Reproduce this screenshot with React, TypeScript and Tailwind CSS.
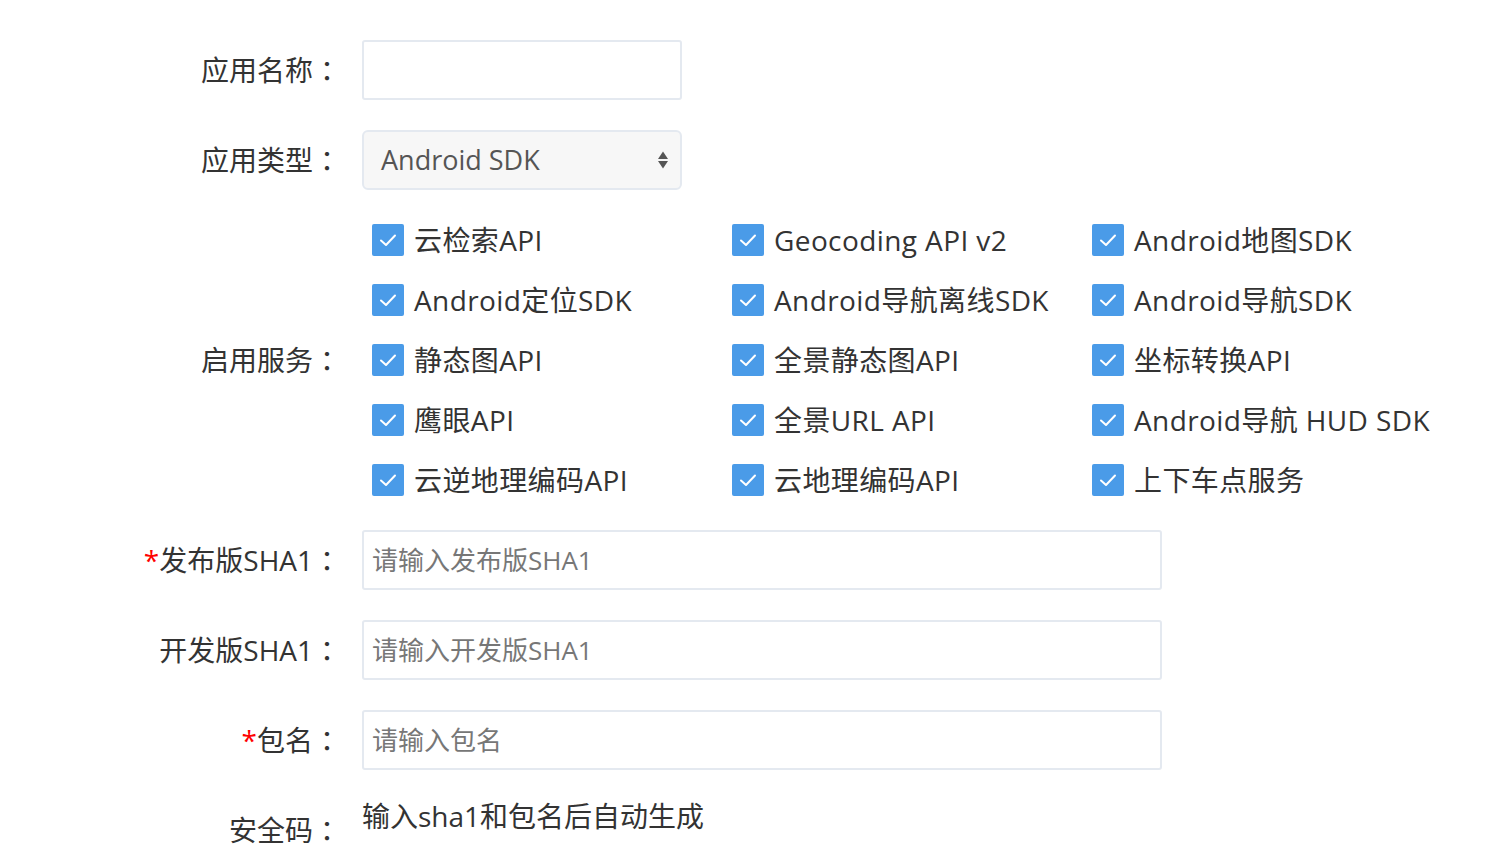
import React from "react";

const SERVICES = [
  "云检索API",
  "Geocoding API v2",
  "Android地图SDK",
  "Android定位SDK",
  "Android导航离线SDK",
  "Android导航SDK",
  "静态图API",
  "全景静态图API",
  "坐标转换API",
  "鹰眼API",
  "全景URL API",
  "Android导航 HUD SDK",
  "云逆地理编码API",
  "云地理编码API",
  "上下车点服务",
];

function Label({ text, required }: { text: string; required?: boolean }) {
  return (
    <div className="flex w-[341px] shrink-0 justify-end leading-[60px] whitespace-nowrap">
      {required && <span className="text-[#f00]">*</span>}
      <span>{text}</span>
      <span className="w-[28px] text-center font-['Noto_Sans_CJK_TC',sans-serif]">：</span>
    </div>
  );
}

function TextInput({ placeholder, wide }: { placeholder?: string; wide?: boolean }) {
  return (
    <input
      type="text"
      placeholder={placeholder}
      className={`ml-[21px] h-[60px] ${
        wide ? "w-[800px]" : "w-[320px]"
      } rounded-[3px] border-2 border-[#e4e9f0] bg-white px-[8px] text-[26px] text-[#333] outline-none placeholder:text-[#777]`}
    />
  );
}

function Check({ label }: { label: string }) {
  return (
    <label className="flex h-[60px] items-center gap-[10px] whitespace-nowrap">
      <span className="flex h-[32px] w-[32px] shrink-0 items-center justify-center rounded-[2px] bg-[#4a9be8]">
        <svg width="22" height="22" viewBox="0 0 22 22" fill="none">
          <path
            d="M4 11.5 L9 16 L18 6.5"
            stroke="white"
            strokeWidth="2"
            strokeLinecap="round"
            strokeLinejoin="round"
          />
        </svg>
      </span>
      <span className="tracking-[0.4px]">{label}</span>
    </label>
  );
}

export default function App() {
  return (
    <div className="min-h-[866px] w-[1510px] bg-white pt-[40px] font-['Open_Sans','Noto_Sans_CJK_SC',sans-serif] text-[28px] text-[#333]">
      <div className="flex items-center">
        <Label text="应用名称" />
        <TextInput />
      </div>

      <div className="mt-[30px] flex items-center">
        <Label text="应用类型" />
        <div className="ml-[21px] flex h-[60px] w-[320px] items-center justify-between rounded-[6px] border-2 border-[#e4e9f0] bg-[#f7f7f7] pl-[17px] pr-[11px] text-[27px] text-[#555]">
          <span>Android SDK</span>
          <svg width="12" height="22" viewBox="0 0 12 22">
            <path d="M6 2.5 L11 10 L1 10 Z" fill="#555" />
            <path d="M6 19.5 L11 12 L1 12 Z" fill="#555" />
          </svg>
        </div>
      </div>

      <div className="mt-[20px] flex items-center">
        <Label text="启用服务" />
        <div className="ml-[31px] grid grid-cols-[360px_360px_360px]">
          {SERVICES.map((s) => (
            <Check key={s} label={s} />
          ))}
        </div>
      </div>

      <div className="mt-[20px] flex items-center">
        <Label text="发布版SHA1" required />
        <TextInput placeholder="请输入发布版SHA1" wide />
      </div>

      <div className="mt-[30px] flex items-center">
        <Label text="开发版SHA1" />
        <TextInput placeholder="请输入开发版SHA1" wide />
      </div>

      <div className="mt-[30px] flex items-center">
        <Label text="包名" required />
        <TextInput placeholder="请输入包名" wide />
      </div>

      <div className="mt-[30px] flex items-start">
        <Label text="安全码" />
        <div className="ml-[21px] leading-[32px]">输入sha1和包名后自动生成</div>
      </div>
    </div>
  );
}
